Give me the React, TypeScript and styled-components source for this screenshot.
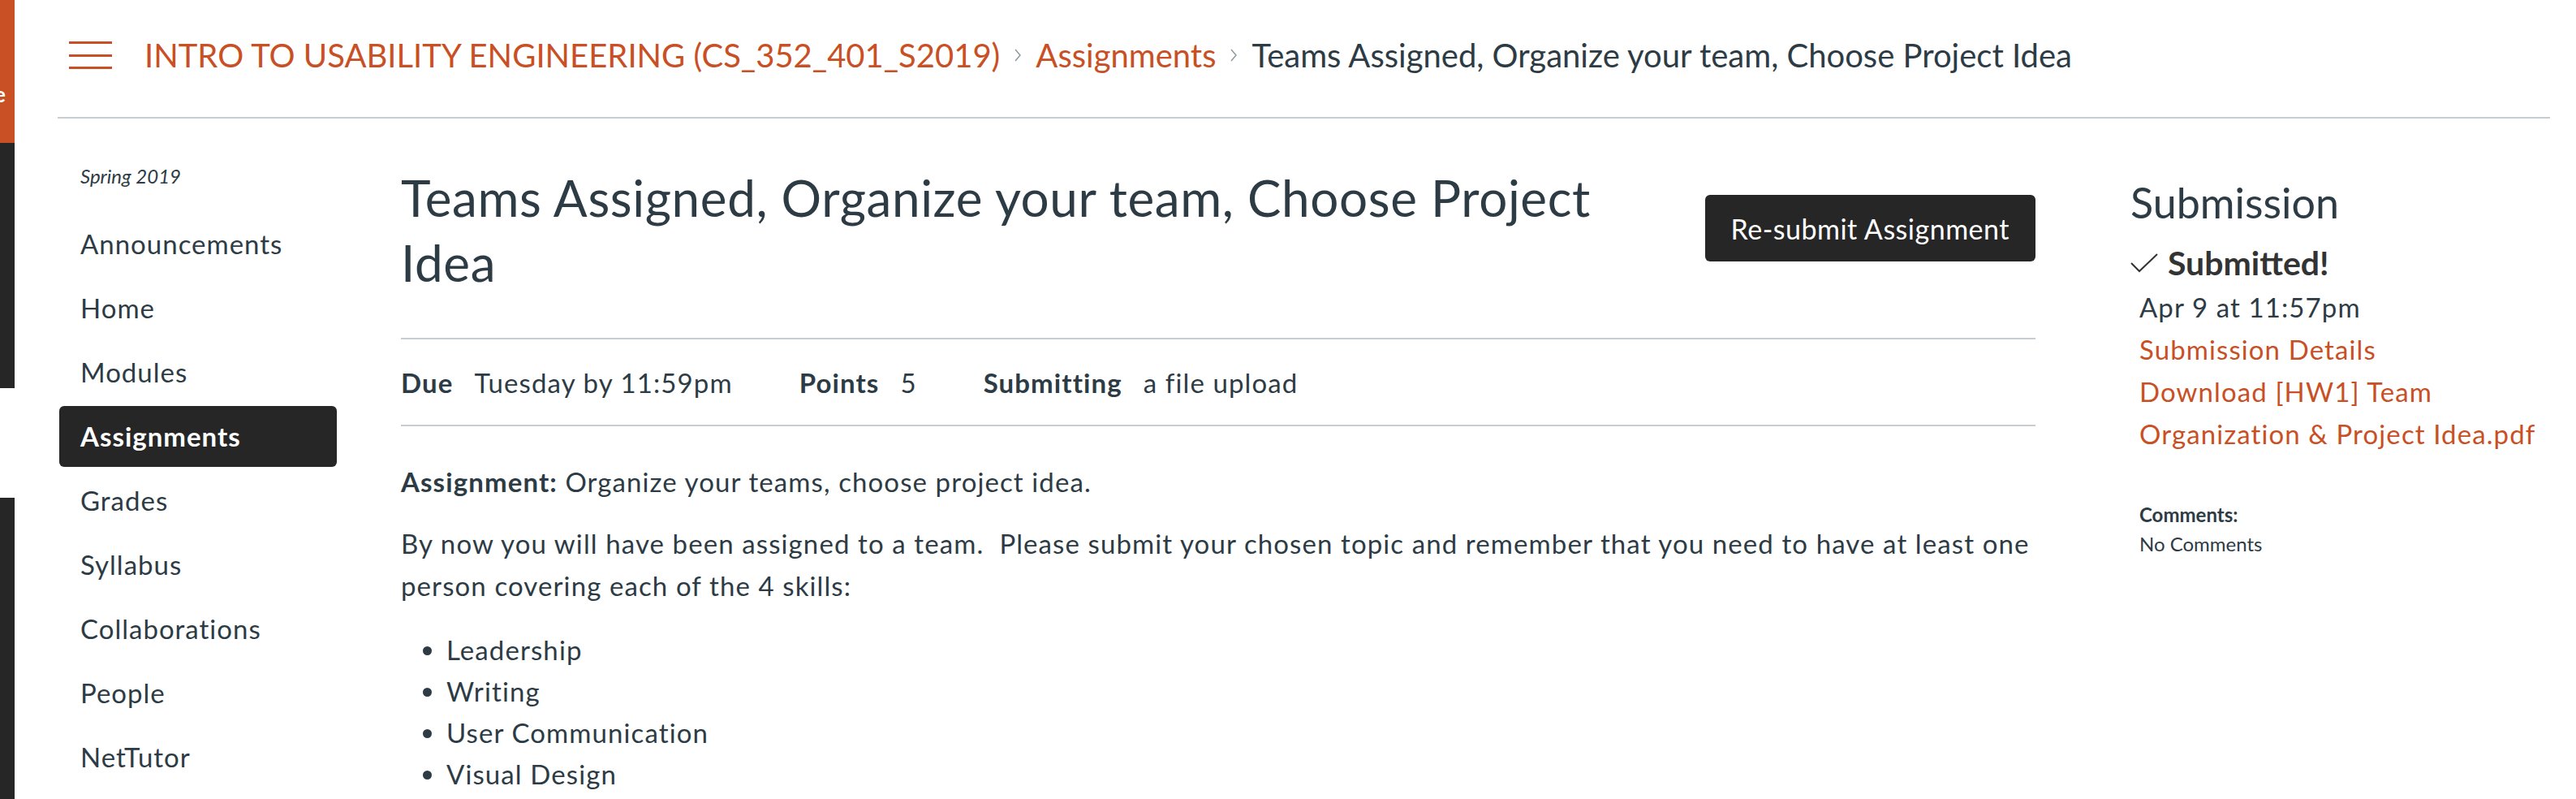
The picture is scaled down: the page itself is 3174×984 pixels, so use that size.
import React from "react"
import styled, { createGlobalStyle } from "styled-components"

const GlobalStyle = createGlobalStyle`
  html, body {
    margin: 0;
    padding: 0;
    background: #ffffff;
  }
  body {
    font-family: Lato, "Open Sans", "Liberation Sans", sans-serif;
    color: #2d3b45;
  }
`

const orange = "#c94f24"
const ink = "#2d3b45"
const rule = "#c7cdd1"

const Page = styled.div`
  display: flex;
  width: 3174px;
  min-height: 984px;
  overflow: hidden;
`

const GlobalNav = styled.nav`
  display: flex;
  flex-direction: column;
  width: 18px;
  flex-shrink: 0;
  overflow: hidden;
`

const NavBlock = styled.div<{ $h?: number; $bg: string }>`
  height: ${(p) => (p.$h ? `${p.$h}px` : "auto")};
  flex: ${(p) => (p.$h ? "none" : "1")};
  background: ${(p) => p.$bg};
`

const NavLabel = styled.span`
  display: block;
  margin: 96px 0 0 -7px;
  color: #ffffff;
  font-size: 26px;
  font-weight: 700;
  line-height: 40px;
`

const Wrapper = styled.div`
  margin-left: 53px;
  width: 3071px;
  flex-shrink: 0;
`

const Header = styled.header`
  display: flex;
  align-items: center;
  padding: 0 0 8px 14px;
  box-sizing: border-box;
  height: 146px;
  border-bottom: 2px solid ${rule};
`

const Hamburger = styled.button`
  display: flex;
  flex-direction: column;
  justify-content: space-between;
  width: 53px;
  height: 34px;
  padding: 0;
  margin-right: 40px;
  border: 0;
  background: none;

  span {
    display: block;
    height: 3px;
    background: ${orange};
  }
`

const Crumbs = styled.ol`
  display: flex;
  align-items: center;
  list-style: none;
  margin: 0;
  padding: 0;
  font-size: 40px;
  line-height: 48px;
`

const Crumb = styled.li<{ $current?: boolean }>`
  display: flex;
  align-items: center;
  color: ${(p) => (p.$current ? ink : orange)};
`

const Chevron = styled.svg`
  margin: 0 17px;
`

const Body = styled.div`
  display: flex;
  align-items: flex-start;
`

const Sidebar = styled.aside`
  width: 342px;
  margin-left: 2px;
  padding-top: 53px;
  flex-shrink: 0;
`

const Term = styled.div`
  padding-left: 26px;
  margin-bottom: 28px;
  font-size: 24px;
  font-style: italic;
  line-height: 36px;
`

const NavItem = styled.a<{ $active?: boolean }>`
  display: block;
  height: 75px;
  margin-bottom: 4px;
  padding-left: 26px;
  border-radius: 6px;
  font-size: 33px;
  letter-spacing: 1px;
  line-height: 75px;
  text-decoration: none;
  color: ${(p) => (p.$active ? "#ffffff" : ink)};
  background: ${(p) => (p.$active ? "#262626" : "transparent")};
  font-weight: ${(p) => (p.$active ? 700 : 400)};
`

const Main = styled.main`
  width: 2014px;
  margin-left: 79px;
  padding-top: 57px;
  flex-shrink: 0;
`

const TitleRow = styled.div`
  display: flex;
  justify-content: space-between;
  align-items: flex-start;
`

const Title = styled.h1`
  width: 1530px;
  margin: 0;
  font-size: 62px;
  letter-spacing: 0.6px;
  font-weight: 400;
  line-height: 80px;
`

const Button = styled.button`
  margin-top: 37px;
  height: 82px;
  padding: 0 32px;
  border: 0;
  border-radius: 6px;
  background: #262626;
  color: #ffffff;
  font-family: inherit;
  font-size: 34px;
  letter-spacing: 0.5px;
`

const Rule = styled.hr`
  margin: 0;
  border: 0;
  border-top: 2px solid ${rule};
`

const TitleRule = styled(Rule)`
  margin-top: 53px;
`

const Meta = styled.ul`
  display: flex;
  align-items: center;
  height: 105px;
  margin: 0;
  padding: 0;
  list-style: none;
  font-size: 33px;
  letter-spacing: 1.1px;
`

const MetaItem = styled.li`
  display: flex;
  margin-right: 82px;
`

const MetaLabel = styled.span`
  font-weight: 700;
  margin-right: 26px;
`

const Description = styled.div`
  padding-top: 42px;
  font-size: 33px;
  letter-spacing: 1.1px;
  line-height: 52px;

  p {
    margin: 0 0 24px;
  }
  ul {
    margin: 28px 0 0;
    padding-left: 56px;
    line-height: 51px;
  }
`

const Aside = styled.aside`
  width: 515px;
  margin-left: 117px;
  padding-top: 72px;
  flex-shrink: 0;
`

const AsideTitle = styled.h2`
  margin: 0 0 18px;
  font-size: 52px;
  font-weight: 400;
  line-height: 62px;
`

const Submitted = styled.div`
  display: flex;
  align-items: center;
  gap: 12px;
  color: #333333;
  font-size: 41px;
  font-weight: 700;
  line-height: 52px;
`

const Details = styled.div`
  margin-top: 2px;
  padding-left: 11px;
  font-size: 33px;
  letter-spacing: 1.1px;
  line-height: 52px;

  a {
    display: block;
    color: ${orange};
    text-decoration: none;
  }
`

const Comments = styled.div`
  margin-top: 56px;
  padding-left: 11px;
  font-size: 24px;
  line-height: 36px;

  strong {
    display: block;
  }
`

const navItems = [
  "Announcements",
  "Home",
  "Modules",
  "Assignments",
  "Grades",
  "Syllabus",
  "Collaborations",
  "People",
  "NetTutor",
]

const Sep = () => (
  <Chevron width="10" height="20" viewBox="0 0 10 20">
    <polyline points="2,3 8,10 2,17" fill="none" stroke="#8b969e" strokeWidth="1.4" />
  </Chevron>
)

export default function App() {
  return (
    <Page>
      <GlobalStyle />
      <GlobalNav>
        <NavBlock $h={176} $bg={orange}>
          <NavLabel>e</NavLabel>
        </NavBlock>
        <NavBlock $h={302} $bg="#262626" />
        <NavBlock $h={135} $bg="#ffffff" />
        <NavBlock $bg="#262626" />
      </GlobalNav>

      <Wrapper>
        <Header>
          <Hamburger aria-label="Menu">
            <span />
            <span />
            <span />
          </Hamburger>
          <Crumbs>
            <Crumb>INTRO TO USABILITY ENGINEERING (CS_352_401_S2019)</Crumb>
            <Sep />
            <Crumb>Assignments</Crumb>
            <Sep />
            <Crumb $current>Teams Assigned, Organize your team, Choose Project Idea</Crumb>
          </Crumbs>
        </Header>

        <Body>
          <Sidebar>
            <Term>Spring 2019</Term>
            {navItems.map((item) => (
              <NavItem key={item} $active={item === "Assignments"}>
                {item}
              </NavItem>
            ))}
          </Sidebar>

          <Main>
            <TitleRow>
              <Title>Teams Assigned, Organize your team, Choose Project Idea</Title>
              <Button>Re-submit Assignment</Button>
            </TitleRow>
            <TitleRule />
            <Meta>
              <MetaItem>
                <MetaLabel>Due</MetaLabel>
                <span>Tuesday by 11:59pm</span>
              </MetaItem>
              <MetaItem>
                <MetaLabel>Points</MetaLabel>
                <span>5</span>
              </MetaItem>
              <MetaItem>
                <MetaLabel>Submitting</MetaLabel>
                <span>a file upload</span>
              </MetaItem>
            </Meta>
            <Rule />
            <Description>
              <p>
                <strong>Assignment:</strong> Organize your teams, choose project idea.
              </p>
              <p>
                By now you will have been assigned to a team.&nbsp; Please submit your chosen topic and
                remember that you need to have at least one person covering each of the 4 skills:
              </p>
              <ul>
                <li>Leadership</li>
                <li>Writing</li>
                <li>User Communication</li>
                <li>Visual Design</li>
              </ul>
            </Description>
          </Main>

          <Aside>
            <AsideTitle>Submission</AsideTitle>
            <Submitted>
              <svg width="34" height="24" viewBox="0 0 34 24">
                <polyline points="1,12 11,22 33,1" fill="none" stroke="#333333" strokeWidth="2" />
              </svg>
              Submitted!
            </Submitted>
            <Details>
              <div>Apr 9 at 11:57pm</div>
              <a>Submission Details</a>
              <a>Download [HW1] Team Organization &amp; Project Idea.pdf</a>
            </Details>
            <Comments>
              <strong>Comments:</strong>
              No Comments
            </Comments>
          </Aside>
        </Body>
      </Wrapper>
    </Page>
  )
}
